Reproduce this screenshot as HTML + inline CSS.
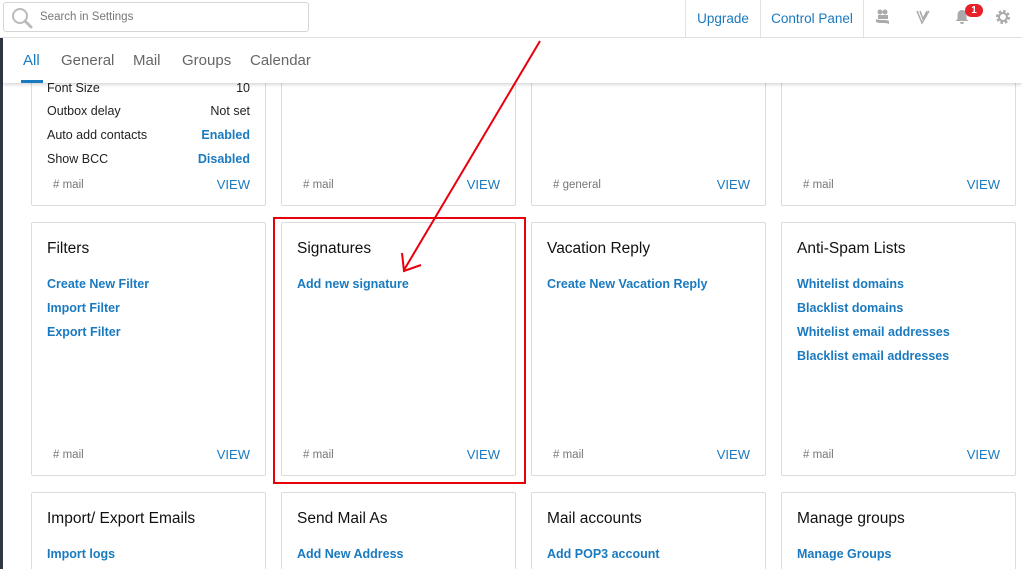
<!DOCTYPE html>
<html style="width:1022px;height:569px;overflow:hidden"><head><meta charset="utf-8"><style>
*{box-sizing:border-box;margin:0;padding:0}
body{width:1022px;height:569px;overflow:hidden;background:#fff;font-family:"Liberation Sans",sans-serif;position:relative;color:#222}
.strip{position:absolute;left:0;top:38px;width:3px;height:531px;background:#2e3742}
.top{position:absolute;left:0;top:0;width:1022px;height:38px;border-bottom:1px solid #e2e2e2;background:#fff}
.search{position:absolute;left:3px;top:2px;width:306px;height:30px;border:1px solid #d6d6d6;border-radius:3px;background:#fff}
.search span{position:absolute;left:36px;top:8px;font-size:11.5px;color:#777}
.tb{position:absolute;top:0;height:37px;border-left:1px solid #e2e2e2;font-size:13.5px;color:#1a7abf;padding:11px 0 0 0;text-align:center}
.tabs{position:absolute;left:3px;top:38px;width:1019px;height:45px;background:#fff;box-shadow:0 2px 3px rgba(0,0,0,.15);z-index:5}
.tabs span{position:absolute;top:14px;font-size:15px;color:#666}
.card{position:absolute;width:235px;border:1px solid #dcdcdc;border-radius:2px;background:#fff;overflow:hidden}
.t{position:absolute;left:15px;font-size:15.5px;color:#111}
.l{position:absolute;left:15px;font-size:12.5px;font-weight:bold;color:#1a7abf}
.r{position:absolute;left:15px;right:15px;font-size:12.5px;color:#222}
.r b{float:right;color:#1a7abf}
.r i{float:right;font-style:normal}
.tag{position:absolute;left:21px;font-size:11.5px;color:#777}
.v{position:absolute;right:15px;font-size:13px;color:#1a7abf}
</style></head><body>
<div class="strip"></div>
<div class="top">
 <div class="search"><svg width="26" height="26" style="position:absolute;left:6px;top:2px" viewBox="0 0 26 26"><circle cx="10" cy="11" r="7" fill="none" stroke="#bbb" stroke-width="2"/><path d="M15 16l6 6" stroke="#bbb" stroke-width="3" stroke-linecap="round"/></svg><span>Search in Settings</span></div>
 <div class="tb" style="left:685px;width:75px">Upgrade</div>
 <div class="tb" style="left:760px;width:103px">Control Panel</div>
 <div class="tb" style="left:863px;width:159px"></div>
 <svg style="position:absolute;left:874px;top:8px" width="18" height="18" viewBox="0 0 18 18"><circle cx="6" cy="4" r="2.5" fill="#aaa"/><circle cx="11" cy="4" r="2.5" fill="#aaa"/><path d="M4 7h10v4H4z M2 11c4 2 9 0 13 2v3C11 14 6 16 2 14z" fill="#aaa"/></svg>
 <svg style="position:absolute;left:914px;top:8px" width="18" height="18" viewBox="0 0 18 18"><path d="M3 3l5 12 7-12M6 3l3 8 4-8" fill="none" stroke="#aaa" stroke-width="1.5"/></svg>
 <svg style="position:absolute;left:954px;top:8px" width="16" height="18" viewBox="0 0 16 18"><path d="M8 2c3 0 4.5 2.5 4.5 5v4l2 2H1.5l2-2V7C3.5 4.5 5 2 8 2zM6 14h4a2 2 0 0 1-4 0z" fill="#aaa"/></svg>
 <div style="position:absolute;left:965px;top:4px;width:18px;height:13px;border-radius:7px;background:#e8202a;color:#fff;font-size:10px;font-weight:bold;text-align:center;line-height:13px">1</div>
 <svg style="position:absolute;left:994px;top:8px" width="18" height="18" viewBox="0 0 18 18"><circle cx="9" cy="9" r="5.5" fill="none" stroke="#aaa" stroke-width="3" stroke-dasharray="2.5 1.8"/><circle cx="9" cy="9" r="4" fill="none" stroke="#aaa" stroke-width="2"/></svg>
</div>
<div class="tabs">
 <span style="left:20px;color:#1a7abf">All</span>
 <div style="position:absolute;left:18px;top:42px;width:22px;height:3px;background:#1a7abf"></div>
 <span style="left:58px">General</span><span style="left:130px">Mail</span><span style="left:179px">Groups</span><span style="left:247px">Calendar</span>
</div>

<div class="card" style="left:31px;top:40px;height:166px">
 <div class="r" style="top:40px">Font Size<i>10</i></div>
 <div class="r" style="top:63px">Outbox delay<i>Not set</i></div>
 <div class="r" style="top:87px">Auto add contacts<b>Enabled</b></div>
 <div class="r" style="top:111px">Show BCC<b>Disabled</b></div>
 <div class="tag" style="top:138px"># mail</div><div class="v" style="top:136px">VIEW</div>
</div>
<div class="card" style="left:281px;top:40px;height:166px"><div class="tag" style="top:138px"># mail</div><div class="v" style="top:136px">VIEW</div></div>
<div class="card" style="left:531px;top:40px;height:166px"><div class="tag" style="top:138px"># general</div><div class="v" style="top:136px">VIEW</div></div>
<div class="card" style="left:781px;top:40px;height:166px"><div class="tag" style="top:138px"># mail</div><div class="v" style="top:136px">VIEW</div></div>

<div class="card" style="left:31px;top:222px;height:254px"><div class="t" style="top:17px">Filters</div>
 <div class="l" style="top:54px">Create New Filter</div><div class="l" style="top:78px">Import Filter</div><div class="l" style="top:102px">Export Filter</div>
 <div class="tag" style="top:226px"># mail</div><div class="v" style="top:224px">VIEW</div></div>
<div class="card" style="left:281px;top:222px;height:254px"><div class="t" style="top:17px">Signatures</div>
 <div class="l" style="top:54px">Add new signature</div>
 <div class="tag" style="top:226px"># mail</div><div class="v" style="top:224px">VIEW</div></div>
<div class="card" style="left:531px;top:222px;height:254px"><div class="t" style="top:17px">Vacation Reply</div>
 <div class="l" style="top:54px">Create New Vacation Reply</div>
 <div class="tag" style="top:226px"># mail</div><div class="v" style="top:224px">VIEW</div></div>
<div class="card" style="left:781px;top:222px;height:254px"><div class="t" style="top:17px">Anti-Spam Lists</div>
 <div class="l" style="top:54px">Whitelist domains</div><div class="l" style="top:78px">Blacklist domains</div><div class="l" style="top:102px">Whitelist email addresses</div><div class="l" style="top:126px">Blacklist email addresses</div>
 <div class="tag" style="top:226px"># mail</div><div class="v" style="top:224px">VIEW</div></div>

<div class="card" style="left:31px;top:492px;height:100px"><div class="t" style="top:17px">Import/ Export Emails</div><div class="l" style="top:54px">Import logs</div></div>
<div class="card" style="left:281px;top:492px;height:100px"><div class="t" style="top:17px">Send Mail As</div><div class="l" style="top:54px">Add New Address</div></div>
<div class="card" style="left:531px;top:492px;height:100px"><div class="t" style="top:17px">Mail accounts</div><div class="l" style="top:54px">Add POP3 account</div></div>
<div class="card" style="left:781px;top:492px;height:100px"><div class="t" style="top:17px">Manage groups</div><div class="l" style="top:54px">Manage Groups</div></div>

<div style="position:absolute;left:273px;top:217px;width:253px;height:267px;border:2px solid #e8000b;z-index:6"></div>
<svg style="position:absolute;left:0;top:0;z-index:7" width="1022" height="569"><path d="M540 41L404 270" stroke="#e8000b" stroke-width="2" fill="none"/><path d="M402 253L404 271L421 265" stroke="#e8000b" stroke-width="2" fill="none"/></svg>
</body></html>
